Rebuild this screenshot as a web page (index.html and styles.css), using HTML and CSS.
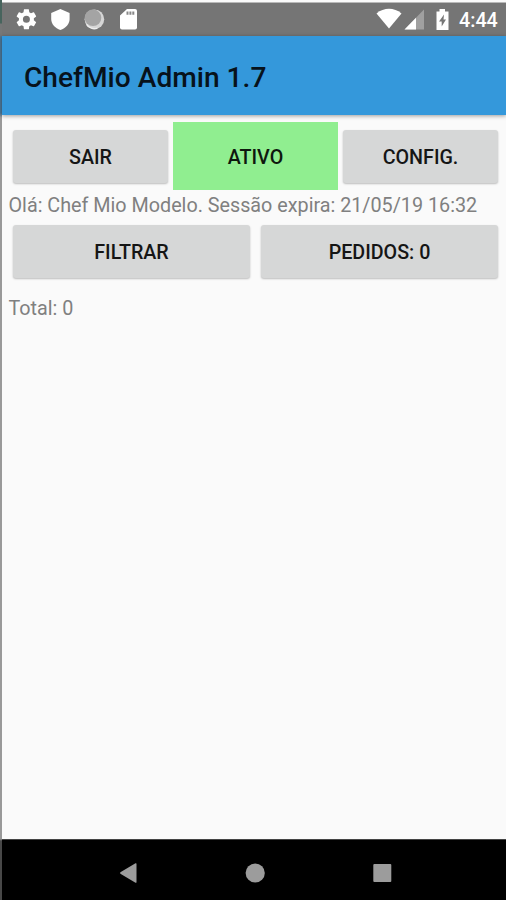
FILE: index.html
```html
<!DOCTYPE html>
<html lang="pt">
<head>
<meta charset="utf-8">
<title>ChefMio Admin</title>
<link rel="stylesheet" href="styles.css">
</head>
<body>
<div class="screen">
  <header class="status">
    <svg class="status-left" width="118" height="33" viewBox="0 0 118 33">
      <g transform="translate(12.4 4.300)">
        <path fill="#fff" d="M19.43 12.98c.04-.32.07-.64.07-.98s-.03-.66-.07-.98l2.11-1.65c.19-.15.24-.42.12-.64l-2-3.46c-.12-.22-.39-.3-.61-.22l-2.49 1c-.52-.4-1.08-.73-1.69-.98l-.38-2.65C14.46 2.18 14.25 2 14 2h-4c-.25 0-.46.18-.49.42l-.38 2.65c-.61.25-1.17.59-1.69.98l-2.49-1c-.23-.09-.49 0-.61.22l-2 3.46c-.13.22-.07.49.12.64l2.11 1.65c-.04.32-.07.65-.07.98s.03.66.07.98l-2.11 1.65c-.19.15-.24.42-.12.64l2 3.46c.12.22.39.3.61.22l2.49-1c.52.4 1.08.73 1.69.98l.38 2.65c.03.24.24.42.49.42h4c.25 0 .46-.18.49-.42l.38-2.65c.61-.25 1.17-.59 1.69-.98l2.49 1c.23.09.49 0 .61-.22l2-3.46c.12-.22.07-.49-.12-.64l-2.11-1.65zM12 15.5A3.5 3.5 0 1 1 12 8.500a3.500 3.500 0 0 1 0 7z"/>
      </g>
      <path fill="#fff" d="M58.400 6l9.200 4v6c0 5-3.900 9.300-9.200 11-5.300-1.700-9.200-6-9.200-11v-6z"/>
      <circle cx="92.400" cy="16.300" r="9.800" fill="#d6d6d6"/>
      <circle cx="91" cy="14.800" r="8.300" fill="#a4a4a4"/>
      <path d="M84.500 21.300a9 9 0 0 0 11 3.800" fill="none" stroke="#eee" stroke-width="1.300"/>
    </svg>
    <svg class="status-card" width="18" height="33" viewBox="0 0 18 33">
      <path fill="#fff" d="M7 6h8q2 0 2 2v16.500q0 2-2 2H2q-2 0-2-2V12.500z"/>
      <path stroke="#888" stroke-width="3.200" stroke-dasharray="2 .9" d="M6.500 10.200h8"/>
    </svg>
    <svg class="status-right" width="76" height="33" viewBox="0 0 76 33">
      <path fill="#fff" d="M-.5 10.500C7 4.300 17 4.300 24.500 10.500L12 25.500z"/>
      <path fill="#a0a0a0" d="M47 6.500v20H27.500z"/>
      <path fill="#fff" d="M39 14.700v11.800H27.500z"/>
      <path fill="#fff" d="M62.500 6h5.500v2.500h3.500V27H59.500V8.500h3z"/>
      <path fill="#777" d="M67 11.500l-5 7h2.700v5l4.300-7h-2.500z"/>
    </svg>
    <span class="clock">4:44</span>
  </header>
  <div class="toolbar"><h1>ChefMio Admin 1.7</h1></div>
  <main>
    <div class="row three">
      <button class="btn">SAIR</button>
      <button class="btn active">ATIVO</button>
      <button class="btn">CONFIG.</button>
    </div>
    <p class="info">Olá: Chef Mio Modelo. Sessão expira: 21/05/19 16:32</p>
    <div class="row two">
      <button class="btn">FILTRAR</button>
      <button class="btn">PEDIDOS: 0</button>
    </div>
    <p class="total">Total: 0</p>
  </main>
  <nav>
    <svg width="20" height="22" viewBox="0 0 20 22"><path fill="#9c9c9c" d="M2.800 9.900L17.500 1.300q1-.5 1 .7v18q0 1.200-1 .7L2.800 12.100q-1.800-1.100 0-2.200z"/></svg>
    <svg width="20" height="22" viewBox="0 0 20 22"><circle cx="10.200" cy="11" r="9.600" fill="#9c9c9c"/></svg>
    <svg width="20" height="22" viewBox="0 0 20 22"><rect x="1.300" y="2" width="18" height="18" rx="1" fill="#9c9c9c"/></svg>
  </nav>
</div>
</body>
</html>
```
FILE: styles.css
```css
* { box-sizing: border-box; }
body { margin: 0; background: #fafafa; font-family: Roboto, "Liberation Sans", sans-serif; }
h1, p { margin: 0; font-weight: 400; }
.screen {
  height: 900px;
  display: flex;
  flex-direction: column;
  padding-top: 3px;
  border-left: 2px solid;
  border-image: linear-gradient(#47645d 0 24px, #777 25px 36px, #4c7797 38px 114px, #999 118px 838px, #484848 840px) 1;
}
.status { height: 33px; background: #757575; display: flex; flex: none; align-items: center; box-shadow: 0 -1px #b9b9b9; }
.status-left { width: 118px; flex: none; }
.status-right { margin-left: 239px; flex: none; overflow: visible; }
.status-card { flex: none; }
.clock { margin-left: 6px; padding-top: 1px; color: #fff; font-size: 19.7px; font-weight: 500; line-height: 33px; white-space: nowrap; }
.toolbar { height: 79px; flex: none; background: #3498db; display: flex; align-items: center; padding: 4px 0 0 22px; box-shadow: 0 1px 4px rgba(0,0,0,.38); z-index: 1; }
h1 { font-size: 28.15px; font-weight: 500; line-height: 34px; color: #07121b; white-space: nowrap; }
main { flex: 1; padding: 7px 8px 0 11px; }
.row { display: grid; align-items: center; }
.three { grid-template-columns: 155px 165px 155px; gap: 5px; height: 68px; }
.two { grid-template-columns: 237px 237px; gap: 11px; height: 53px; }
.btn {
  height: 53px;
  padding: 2px 0 0;
  border: 0;
  border-radius: 3px;
  background: #d6d7d7;
  box-shadow: 0 1px 2px rgba(0,0,0,.25);
  color: #151515;
  font: 500 19.7px/51px Roboto, "Liberation Sans", sans-serif;
}
.active { height: 68px; border-radius: 0; background: #90ee90; box-shadow: none; color: #0e180e; }
.info, .total { margin-left: -4.5px; color: #808080; font-size: 19.75px; line-height: 30px; white-space: nowrap; }
.info { height: 35px; padding-top: 1px; }
.total { margin-top: 16px; }
nav { height: 61px; flex: none; background: #000; display: flex; justify-content: center; align-items: center; gap: 107px; padding: 5px 0 0 2px; border-top: 1px solid #444; }
nav svg { flex: none; }
```
